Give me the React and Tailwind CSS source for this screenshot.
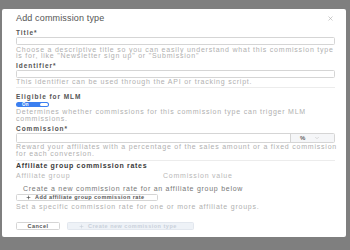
import { Plus, ChevronDown, X } from "lucide-react";

function Label({ children, className = "" }) {
  return (
    <div className={"h-[7px] text-[6.5px] leading-[7px] font-bold text-[#555] tracking-[0.95px] " + className}>
      {children}
    </div>
  );
}

function Help({ children, className = "" }) {
  return (
    <div className={"text-[7px] leading-[6.6px] text-[#b0b0b0] tracking-[0.78px] whitespace-nowrap " + className}>
      {children}
    </div>
  );
}

function App() {
  return (
    <div
      className="w-[350px] h-[250px] bg-[#7f7f7f] pt-[9px] pl-[2px] overflow-hidden"
      style={{ fontFamily: '"Liberation Sans", Arial, sans-serif' }}
    >
      <div className="w-[344px] h-[228px] bg-white rounded-[2px] pl-[14px] pr-[11px]">
        <div className="flex items-center justify-between pt-[3px] h-[15px]">
          <h1 className="text-[9px] leading-[12px] text-[#555] tracking-[0.15px]">
            Add commission type
          </h1>
          <X className="w-[7px] h-[7px] text-[#aaa] mr-[1px]" strokeWidth={2} />
        </div>

        <Label className="mt-[4.5px]">Title*</Label>
        <div className="mt-[1.5px] h-[8px] border border-[#d5d5d5] rounded-[1.5px]" />
        <Help className="mt-[1.5px]">
          Choose a descriptive title so you can easily understand what this commission type
          <br />
          is for, like "Newsletter sign up" or "Submission"
        </Help>

        <Label className="mt-[2.5px]">Identifier*</Label>
        <div className="mt-[0.5px] h-[8px] border border-[#d5d5d5] rounded-[1.5px]" />
        <Help className="mt-[1px]">This identifier can be used through the API or tracking script.</Help>
        <div className="mt-[1.5px] h-px bg-[#ececec]" />

        <Label className="mt-[5px]">Eligible for MLM</Label>
        <div className="mt-[2px] w-[33px] h-[5px] rounded-full bg-[#3b7ff0] flex items-center justify-between pl-[6px] pr-[1px]">
          <span className="text-[4.5px] leading-[5px] text-white font-bold tracking-[0.3px]">On</span>
          <span className="w-[8px] h-[3.5px] rounded-full bg-white" />
        </div>
        <Help className="mt-[2.5px]">
          Determines whether commissions for this commission type can trigger MLM
          <br />
          commissions.
        </Help>

        <Label className="mt-[2.5px]">Commission*</Label>
        <div className="mt-[1px] h-[10px] border border-[#d5d5d5] rounded-[1.5px] flex">
          <div className="flex-1" />
          <div className="w-[44px] bg-[#f5f6f8] border-l border-[#d5d5d5] flex items-center pl-[9px] gap-[9px]">
            <span className="text-[6px] leading-[6px] text-[#666] font-bold">%</span>
            <ChevronDown className="w-[6px] h-[6px] text-[#bbb]" strokeWidth={2} />
          </div>
        </div>
        <Help className="mt-[1.5px]">
          Reward your affiliates with a percentage of the sales amount or a fixed commission
          <br />
          for each conversion.
        </Help>
        <div className="mt-[2px] h-px bg-[#ececec]" />

        <div className="mt-[1.5px] text-[7px] leading-[8px] font-bold text-[#3a3a3a] tracking-[0.7px]">
          Affiliate group commission rates
        </div>
        <div className="mt-[2px] flex text-[7px] leading-[7px] text-[#b8b8b8] tracking-[0.78px]">
          <span className="w-[147px]">Affiliate group</span>
          <span>Commission value</span>
        </div>
        <div className="mt-[5.5px] pl-[7px] text-[7px] leading-[7px] text-[#777] tracking-[0.73px] whitespace-nowrap">
          Create a new commission rate for an affiliate group below
        </div>
        <div className="mt-[2px] w-[142px] h-[7px] border border-[#d5d5d5] rounded-[1.5px] flex items-center pl-[9px] gap-[4px]">
          <Plus className="w-[5px] h-[5px] text-[#444]" strokeWidth={3} />
          <span className="text-[5.5px] leading-[5px] font-bold text-[#555] tracking-[0.45px]">
            Add affiliate group commission rate
          </span>
        </div>
        <Help className="mt-[3.5px]">Set a specific commission rate for one or more affiliate groups.</Help>

        <div className="mt-[11.5px] flex gap-[7px]">
          <div className="w-[44px] h-[8px] border border-[#d5d5d5] rounded-[1.5px] flex items-center justify-center">
            <span className="text-[5.5px] leading-[5px] font-bold text-[#555] tracking-[0.5px]">Cancel</span>
          </div>
          <div className="w-[127px] h-[8px] bg-[#eef2f7] border border-[#e2e7ee] rounded-[1.5px] flex items-center pl-[11px] gap-[4px]">
            <Plus className="w-[5px] h-[5px] text-[#c9d0da]" strokeWidth={3} />
            <span className="text-[5.5px] leading-[5px] font-bold text-[#c9d0da] tracking-[0.5px]">
              Create new commission type
            </span>
          </div>
        </div>
      </div>
    </div>
  );
}

export default App;
